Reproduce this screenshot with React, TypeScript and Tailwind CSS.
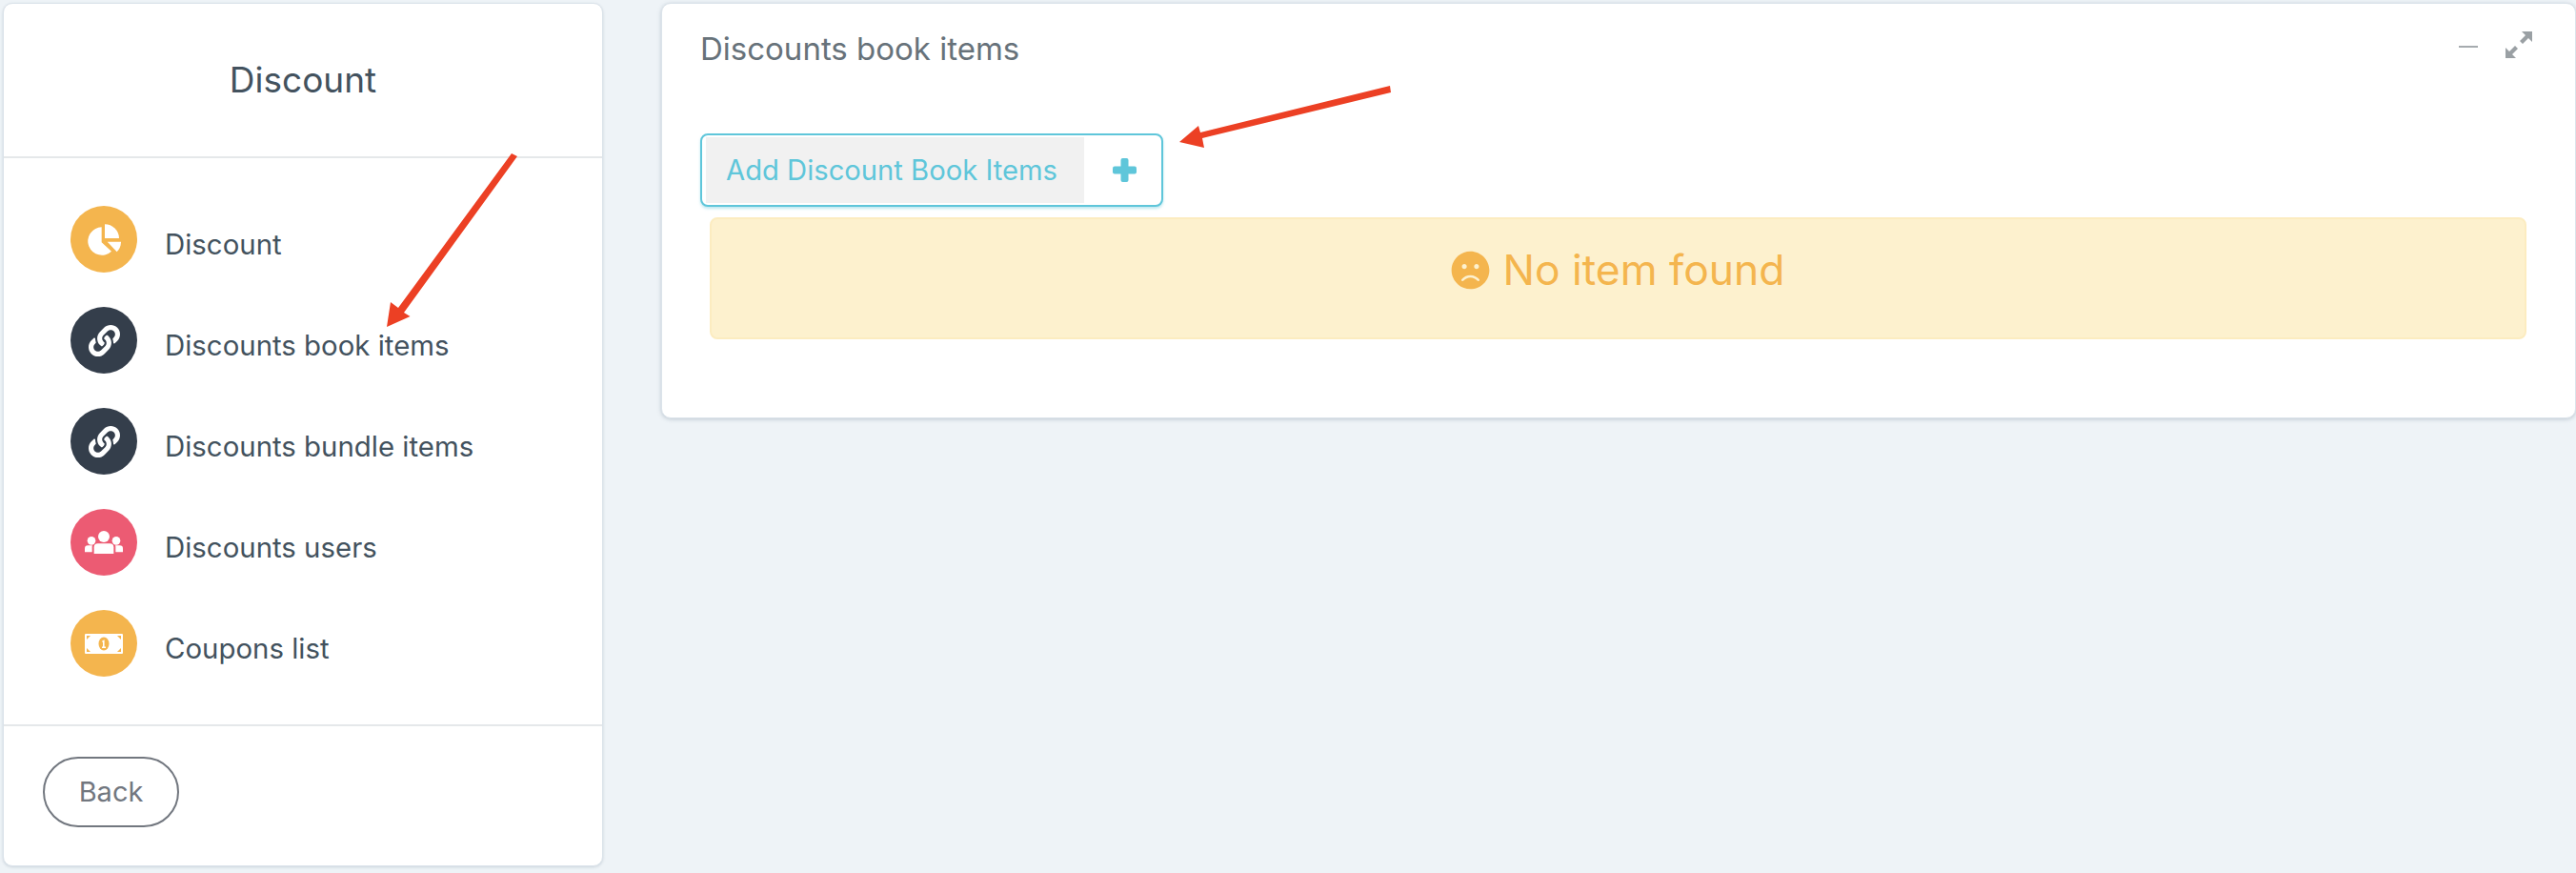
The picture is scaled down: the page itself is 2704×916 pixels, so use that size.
import React from 'react';
import { FaLink, FaFrown } from 'react-icons/fa';

const PieIcon = () => (
  <svg width="35" height="33" viewBox="93 113 105 97" fill="currentColor">
    <path d="M147 113A45 45 0 0 1 192 157L147 157Z" />
    <path d="M155 168L198 168A46 46 0 0 1 185 200Z" />
    <path d="M137 122L137 170L168 198A44 44 0 1 1 137 122Z" />
  </svg>
);

const UsersIcon = () => (
  <svg width="40" height="24" viewBox="87 90 120 72" fill="currentColor">
    <circle cx="147" cy="108" r="18" />
    <circle cx="108" cy="121" r="13" />
    <circle cx="186" cy="121" r="13" />
    <path d="M116 162V142Q116 130 128 130H166Q178 130 178 142V162Z" />
    <path d="M87 157V146Q87 136 97 136H111Q110 138 110 142V157Z" />
    <path d="M207 157V146Q207 136 197 136H183Q184 138 184 142V157Z" />
  </svg>
);

const BillIcon = () => (
  <svg width="40" height="21" viewBox="0 0 40 21">
    <rect width="40" height="21" rx="1" fill="#fff" />
    <path d="M2 2H6L2 6ZM38 2H34L38 6ZM2 19H6L2 15ZM38 19H34L38 15Z" fill="#f4b54e" />
    <ellipse cx="20" cy="10.5" rx="5.5" ry="7" fill="#f4b54e" />
    <path d="M18.2 7.5L20.6 6.2V13.5H22V15H18V13.5H19V8.4L18.2 8.8Z" fill="#fff" />
  </svg>
);

const items = [
  { label: 'Discount', icon: <PieIcon />, bg: 'bg-[#f4b54e]' },
  { label: 'Discounts book items', icon: <FaLink size={33} />, bg: 'bg-[#343e4b]' },
  { label: 'Discounts bundle items', icon: <FaLink size={33} />, bg: 'bg-[#343e4b]' },
  { label: 'Discounts users', icon: <UsersIcon />, bg: 'bg-[#ec5b73]' },
  { label: 'Coupons list', icon: <BillIcon />, bg: 'bg-[#f4b54e]' },
];

const Sidebar: React.FC = () => (
  <aside className="w-[630px] h-[906px] shrink-0 flex flex-col bg-white rounded-[10px] border border-[#dbe3ea] shadow-[0_1px_3px_rgba(100,120,140,0.25)]">
    <div className="h-[162px] shrink-0 flex items-center justify-center border-b-2 border-[#e5e8ea] text-[37px] text-[#43525e]">Discount</div>
    <ul className="flex-1 flex flex-col gap-[36px] pt-[50px] pl-[70px]">
      {items.map(item => (
        <li key={item.label} className="flex items-center gap-[29px] h-[70px]">
          <span className={`w-[70px] h-[70px] rounded-full flex items-center justify-center text-white ${item.bg}`}>{item.icon}</span>
          <span className="text-[29.4px] text-[#43525e] pt-[12px]">{item.label}</span>
        </li>
      ))}
    </ul>
    <div className="h-[148px] shrink-0 border-t-2 border-[#e5e8ea] pl-[41px] pt-[32px]">
      <button className="w-[143px] h-[74px] rounded-[37px] border-2 border-[#72777f] text-[29px] text-[#72777f]">Back</button>
    </div>
  </aside>
);

const Panel: React.FC = () => (
  <section className="flex-1 h-[436px] bg-white rounded-[10px] border border-[#dbe3ea] shadow-[0_1px_4px_rgba(100,120,140,0.35)] pl-[40px] pr-[41px]">
    <div className="flex items-start justify-between pt-[27px] h-[136px]">
      <h2 className="text-[33px] leading-[40px] text-[#67727a]">Discounts book items</h2>
      <div className="flex items-center gap-[29px] pt-[5px] pr-[4px] text-[#9aa0a4]">
        <span className="w-[20px] h-[2px] bg-[#a6abaf]" />
        <svg className="-mt-[3px]" width="28" height="28" viewBox="0 0 28 28" fill="currentColor">
          <path d="M17 0h11v11l-4-4-6 6-3-3 6-6zM0 28V17l4 4 6-6 3 3-6 6 4 4z" />
        </svg>
      </div>
    </div>
    <button className="w-[486px] h-[77px] flex items-stretch rounded-[8px] border-2 border-[#5fc6da] shadow-[0_2px_3px_rgba(95,198,218,0.4)] bg-white p-[2px] pl-[4px] text-[#5fc6da]">
      <span className="w-[397px] bg-[#f1f1f1] flex items-center pl-[21px] text-[29.2px] whitespace-nowrap">Add Discount Book Items</span>
      <span className="flex-1 flex items-center justify-center pl-[6px]">
        <svg width="25" height="25" viewBox="0 0 25 25" fill="currentColor">
          <rect x="8.5" width="8" height="25" rx="2" />
          <rect y="8.5" width="25" height="8" rx="2" />
        </svg>
      </span>
    </button>
    <div className="ml-[10px] mr-[10px] mt-[11px] h-[128px] rounded-[8px] border-2 border-[#fcecc0] bg-[#fdf1ce] flex items-center justify-center gap-[13px] text-[#f4b54e] text-[44.4px] pb-[18px]">
      <FaFrown size={41} />
      <span>No item found</span>
    </div>
  </section>
);

export default function App() {
  return (
    <div className="relative w-[2704px] h-[916px] bg-[#eef3f7] overflow-hidden pl-[3px] pt-[3px] flex gap-[61px] font-['Inter',sans-serif]">
      <Sidebar />
      <Panel />
      <svg className="absolute left-0 top-0 pointer-events-none" width="2704" height="916" fill="#ec4024">
        <path d="M537 161L543 164L424 328L430.5 332L406 343L410 317L418 323Z" />
        <path d="M1459 90L1460 97L1262 145L1264 155L1238 149L1258 132L1260 139Z" />
      </svg>
    </div>
  );
}
